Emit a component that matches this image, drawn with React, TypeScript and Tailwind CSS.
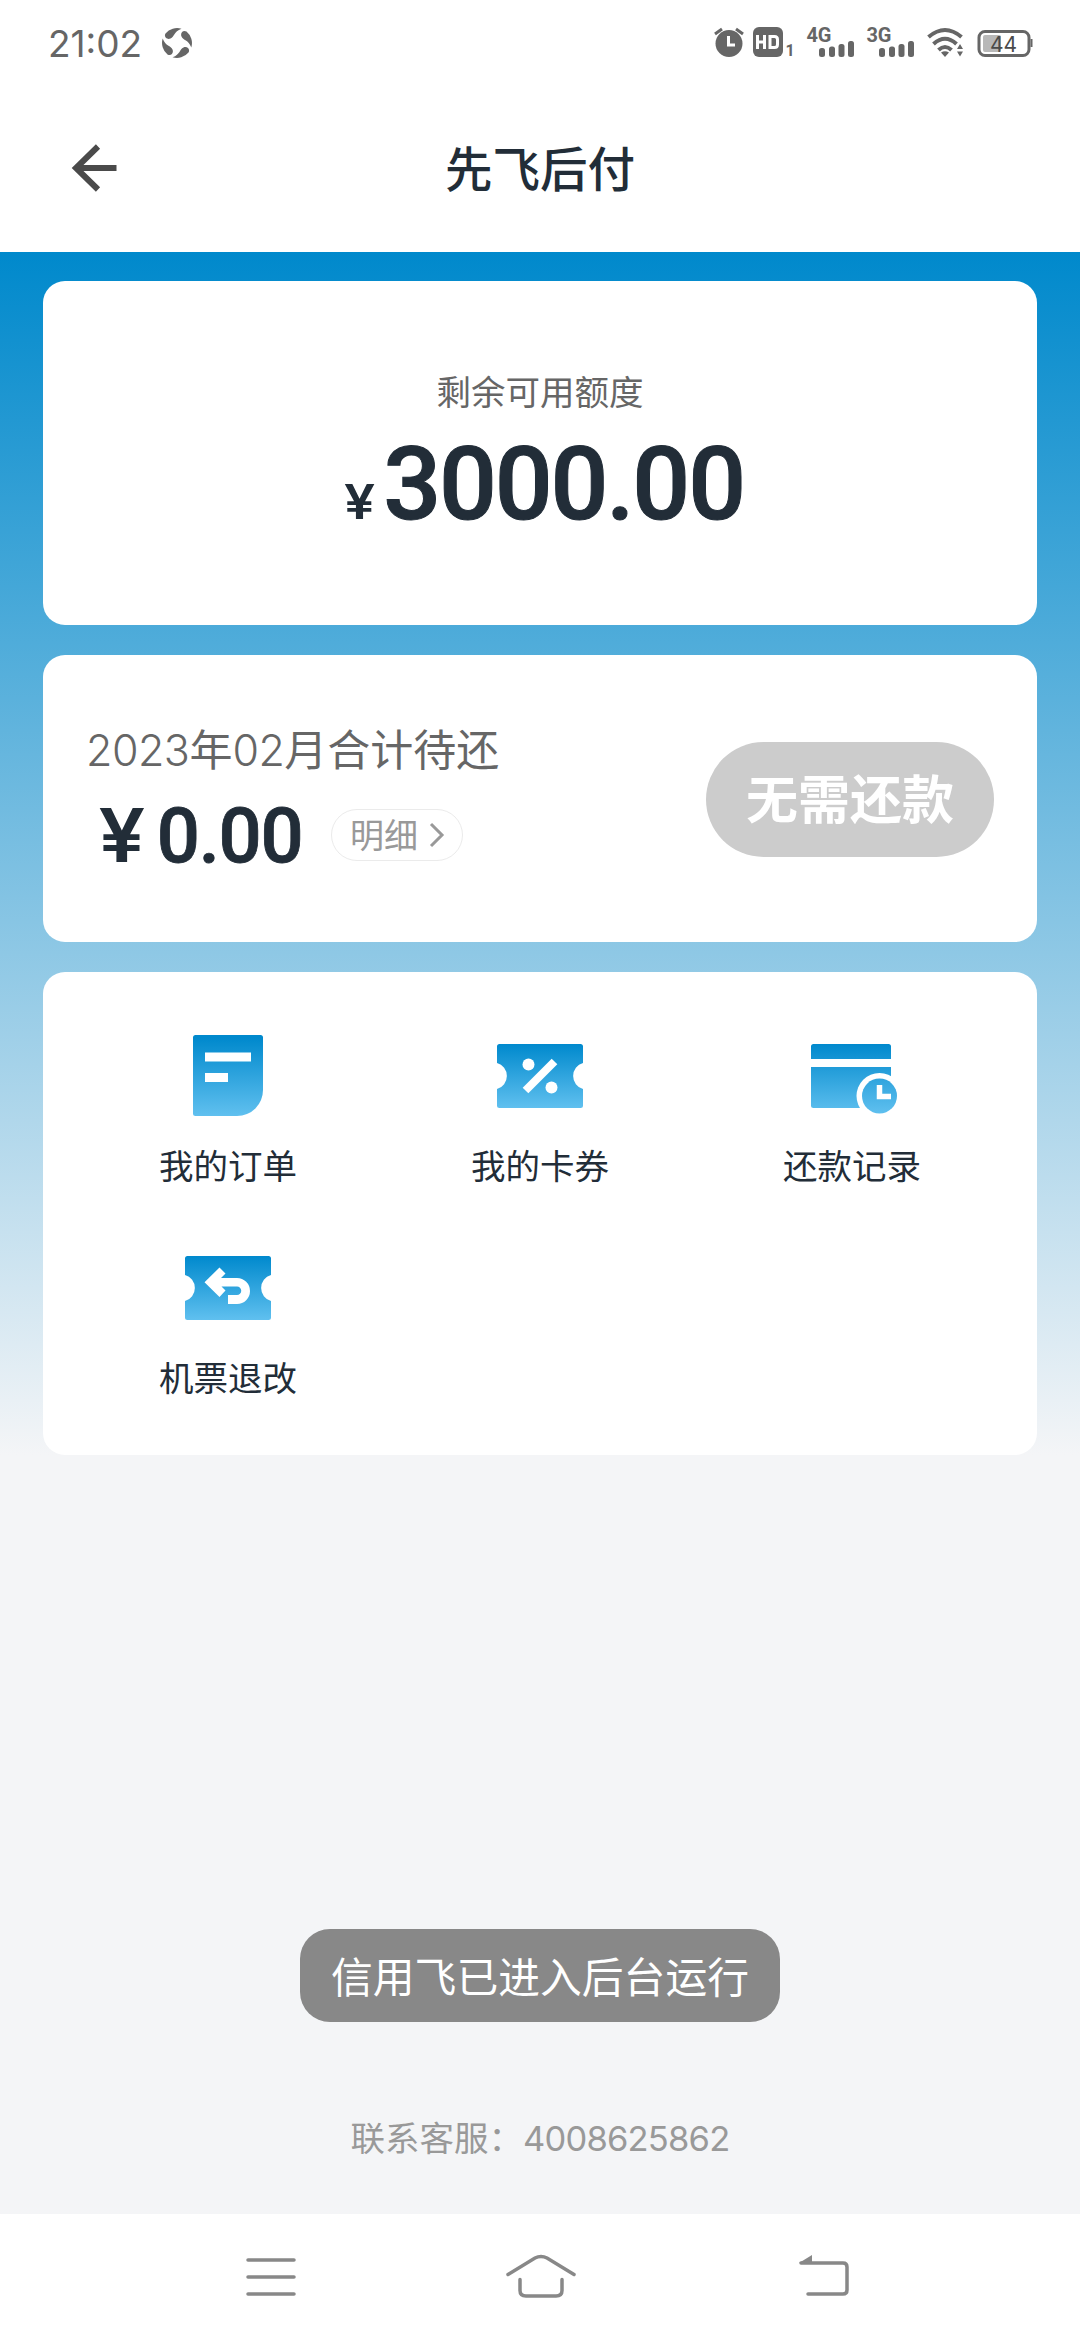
const GRAY = '#666666';

const StatusIcons = () => (
  <svg className="h-[70px] w-[350px] text-[#666666]" viewBox="700 10 350 70" fill="currentColor">
    {/* Alarm */}
    <circle cx="729" cy="43.5" r="13.5" />
    <path d="M715 34l7-5M743 34l-7-5" stroke="currentColor" strokeWidth="3" />
    <path d="M728.500 36v9h6.500" stroke="#fff" strokeWidth="3" fill="none" />
    {/* HD */}
    <rect x="753" y="27" width="30" height="30" rx="6" />
    <path d="M757.500 35v14M764.500 35v14M757.500 42h7" stroke="#fff" strokeWidth="3" fill="none" />
    <path d="M770 36.500h4.500q3 0 3 3v5q0 3-3 3h-4.500z" stroke="#fff" strokeWidth="3" fill="none" />
    <text x="785.500" y="56" fontSize="16" fontWeight="700" fontFamily="Roboto, sans-serif">1</text>
    {/* Mobile signals */}
    {[{ x: 0, label: '4G' }, { x: 60, label: '3G' }].map(({ x, label }) => (
      <g key={label} transform={`translate(${x} 0)`}>
        <text x="806.500" y="41.500" fontSize="20" fontWeight="700" fontFamily="Roboto, sans-serif" textLength="25">{label}</text>
        <rect x="819" y="48" width="6" height="9" rx="2.500" />
        <rect x="829" y="46.500" width="6" height="10.500" rx="2.500" />
        <rect x="838.500" y="44" width="6" height="13" rx="2.500" />
        <rect x="848" y="41" width="6" height="16" rx="2.500" />
      </g>
    ))}
    {/* Wifi */}
    <g fill="none" stroke="currentColor" strokeWidth="4">
      <path d="M928.500 37q16.500-14 33 0" />
      <path d="M933.500 44q11.500-10.500 23 0" />
      <path d="M938.500 50q6.500-6 13 0" />
    </g>
    <path d="M941 52.500q4-2.500 8 0l-4 4.500zM957 49l3-5 3 5zM957 51.500h6l-3 5z" />
    {/* Battery */}
    <rect x="979" y="31.500" width="50" height="24" rx="6" fill="none" stroke="currentColor" strokeWidth="3" />
    <rect x="983" y="35" width="18" height="17" rx="2" fill="#b8b8b8" />
    <rect x="1030.500" y="39" width="2" height="8" />
    <text x="990" y="51.500" fontSize="21" fill="#4a4a4a" fontFamily="Inter, sans-serif" textLength="27">44</text>
  </svg>
);

const StatusBar = () => (
  <div className="flex h-[86px] items-start justify-between bg-white pl-12 pr-[30px]">
    <div className="flex h-[86px] items-center">
      <span className="w-[114px] font-[Inter,sans-serif] text-[37px] leading-none text-[#666666]">21:02</span>
      <svg className="size-[30px]" viewBox="0 0 30 30" fill={GRAY}>
        {[0, 90, 180, 270].map((angle) => (
          <path
            key={angle}
            transform={`rotate(${angle} 15 15)`}
            d="M19.500.700A15 15 0 003.500 5.500C1.500 9 5 12 8.500 10.500C12.500 9 11.500 3.500 19.500.700Z"
          />
        ))}
      </svg>
    </div>
    <div className="pt-2.5">
      <StatusIcons />
    </div>
  </div>
);

const Header = () => (
  <header className="grid h-[166px] grid-cols-[1fr_auto_1fr] items-start bg-white">
    <svg className="ml-[70px] mt-[56px] h-[52px] w-[50px]" viewBox="0 0 50 52" fill="none" stroke="#4a4a4a" strokeWidth="6">
      <path d="M28 4.500L6 26l22 21.500M6 26h40.500" />
    </svg>
    <h1 className="pt-[57px] text-[47.500px] font-medium leading-[48px] text-[#222d38]">先飞后付</h1>
  </header>
);

const Gradient = ({ id, y1, y2 }: { id: string; y1: number; y2: number }) => (
  <defs>
    <linearGradient id={id} gradientUnits="userSpaceOnUse" x1="0" x2="0" y1={y1} y2={y2}>
      <stop stopColor="#0089cd" />
      <stop offset="1" stopColor="#60c0ef" />
    </linearGradient>
  </defs>
);

const OrderIcon = () => (
  <svg className="size-[104px]" viewBox="0 0 104 104">
    <Gradient id="order" y1={14} y2={92} />
    <path d="M19.500 11h65a2.500 2.500 0 012.500 2.500V66a26 26 0 01-26 26H19.500a2.500 2.500 0 01-2.500-2.500v-76A2.500 2.500 0 0119.500 11z" fill="url(#order)" />
    <path d="M29 28.500h46v9H29zM29 49h23v9H29z" fill="#fff" />
  </svg>
);

const ticketPath =
  'M11.500 20h81a2.500 2.500 0 012.500 2.500V39a13.500 13.500 0 000 26v16.500a2.500 2.500 0 01-2.500 2.500h-81A2.500 2.500 0 019 81.500V65a13.500 13.500 0 000-26V22.500A2.500 2.500 0 0111.500 20z';

const CouponIcon = () => (
  <svg className="size-[104px]" viewBox="0 0 104 104">
    <Gradient id="coupon" y1={20} y2={84} />
    <path d={ticketPath} fill="url(#coupon)" />
    <circle cx="40.500" cy="40.500" r="6" fill="#fff" />
    <circle cx="63.500" cy="63.500" r="6" fill="#fff" />
    <path d="M37.500 66.500l29-29" stroke="#fff" strokeWidth="8" />
  </svg>
);

const RecordIcon = () => (
  <svg className="size-[104px]" viewBox="0 0 104 104">
    <Gradient id="record" y1={20} y2={90} />
    <path d="M13.500 20h75a2.500 2.500 0 012.500 2.500V35H11V22.500a2.500 2.500 0 012.500-2.500zM11 43h80v41H13.500a2.500 2.500 0 01-2.500-2.500z" fill="url(#record)" />
    <circle cx="79.500" cy="72" r="23" fill="#fff" />
    <circle cx="79.500" cy="72" r="17.500" fill="url(#record)" />
    <path d="M79.500 61v11.500H91" fill="none" stroke="#fff" strokeWidth="5.500" />
  </svg>
);

const RefundIcon = () => (
  <svg className="size-[104px]" viewBox="0 0 104 104">
    <Gradient id="refund" y1={20} y2={84} />
    <path d={ticketPath} fill="url(#refund)" />
    <path d="M28.500 46.300L43.500 31.500l6 6-4.500 4.500H61a13 13 0 010 26h-9v-9h9a4.250 4.250 0 000-8.500H45.500l4 4-6 6.500z" fill="#fff" />
  </svg>
);

const menuItems = [
  { label: '我的订单', Icon: OrderIcon },
  { label: '我的卡券', Icon: CouponIcon },
  { label: '还款记录', Icon: RecordIcon },
  { label: '机票退改', Icon: RefundIcon },
];

const QuotaCard = () => (
  <section className="h-[344px] rounded-[22px] bg-white pt-[89px] text-center">
    <p className="text-[34.500px] leading-10 text-[#666666]">剩余可用额度</p>
    <p className="mt-6 flex items-baseline justify-center pl-2.5 leading-[100px] text-[#222d38]">
      <span className="mr-2.5 inline-block scale-x-[1.15] font-[Inter,sans-serif] text-[48px] font-semibold">¥</span>
      <span className="font-[Roboto,sans-serif] text-[102px] font-medium tracking-[-2.200px] [-webkit-text-stroke:1px_#222d38]">3000.00</span>
    </p>
  </section>
);

const RepayCard = () => (
  <section className="flex h-[287px] items-start justify-between rounded-[22px] bg-white px-[43px]">
    <div className="pt-[67px]">
      <p className="text-[43px] leading-[50px] text-[#666666]">
        <span className="font-[Inter,sans-serif] font-light tracking-[-0.5px]">2023</span>年
        <span className="font-[Inter,sans-serif] font-light tracking-[-0.5px]">02</span>月合计待还
      </p>
      <div className="mt-7 flex h-[64px] items-center">
        <p className="flex w-[245px] shrink-0 items-baseline pl-[15px] leading-[64px] text-[#222d38]">
          <span className="mr-3.5 inline-block scale-x-[1.12] font-[Inter,sans-serif] text-[74px] font-semibold">¥</span>
          <span className="font-[Roboto,sans-serif] text-[76px] font-medium tracking-[-1.200px] [-webkit-text-stroke:0.8px_#222d38]">0.00</span>
        </p>
        <button className="flex h-[52px] w-[132px] items-center rounded-full border border-[#ebebeb] pl-[18px] text-[34px] text-[#999999]">
          <span className="-mt-1">明细</span>
          <svg className="ml-[11px] h-[26px] w-4" viewBox="0 0 16 26" fill="none" stroke="#999" strokeWidth="3">
            <path d="M2 2l11 11L2 24" />
          </svg>
        </button>
      </div>
    </div>
    <button className="mt-[87px] h-[115px] w-72 rounded-full bg-[#cccccc] pb-1.5 text-[52px] font-bold leading-none text-white">
      无需还款
    </button>
  </section>
);

const MenuCard = () => (
  <section className="grid h-[483px] grid-cols-3 content-start rounded-[22px] bg-white px-[29px] pt-[52px]">
    {menuItems.map(({ label, Icon }) => (
      <div key={label} className="flex h-[212px] flex-col items-center">
        <Icon />
        <span className="mt-4 text-[34.500px] leading-10 text-[#222d38]">{label}</span>
      </div>
    ))}
  </section>
);

const NavBar = () => (
  <nav className="grid h-[126px] grid-cols-3 bg-white px-[129px]">
    <svg className="h-[126px] w-full" viewBox="129 2214 274 126" fill="none" stroke="#888" strokeWidth="3.500" strokeLinecap="round">
      <path d="M248 2260h46M248 2277h46M248 2294h46" />
    </svg>
    <svg className="h-[126px] w-full" viewBox="403 2214 274 126" fill="none" stroke="#888" strokeWidth="3.500" strokeLinecap="round">
      <path d="M508 2274.500l27-16.500q6-3 12 0l27 16.500M520 2279.500v11q0 5.500 6 5.500h30q6 0 6-5.500v-11" />
    </svg>
    <svg className="h-[126px] w-full" viewBox="677 2214 274 126" fill="none" stroke="#888" strokeWidth="3.500" strokeLinecap="round">
      <path d="M801 2263h42q4 0 4 4v23q0 4-4 4h-35" />
      <path d="M799 2263l13-8v8z" fill="#888" stroke="none" />
    </svg>
  </nav>
);

const App = () => {
  return (
    <div className="flex h-[2340px] w-[1080px] flex-col bg-[#f4f5f7] font-['Noto_Sans_CJK_SC',sans-serif]">
      <StatusBar />
      <Header />
      <main className="flex h-[1962px] flex-col bg-[linear-gradient(180deg,#0089cc_0px,#f4f5f7_1203px)] px-[43px] pt-[29px]">
        <div className="flex flex-col gap-[30px]">
          <QuotaCard />
          <RepayCard />
          <MenuCard />
        </div>
        <div className="mt-[474px] flex flex-col items-center">
          <p className="flex h-[93px] w-[480px] items-center justify-center rounded-[30px] bg-[#888888] text-[41.800px] text-white">
            信用飞已进入后台运行
          </p>
          <p className="mt-[94px] text-[34.500px] leading-10 text-[#999999]">
            联系客服：<span className="font-[Inter,sans-serif] tracking-[-0.8px]">4008625862</span>
          </p>
        </div>
      </main>
      <NavBar />
    </div>
  );
};

export default App;
